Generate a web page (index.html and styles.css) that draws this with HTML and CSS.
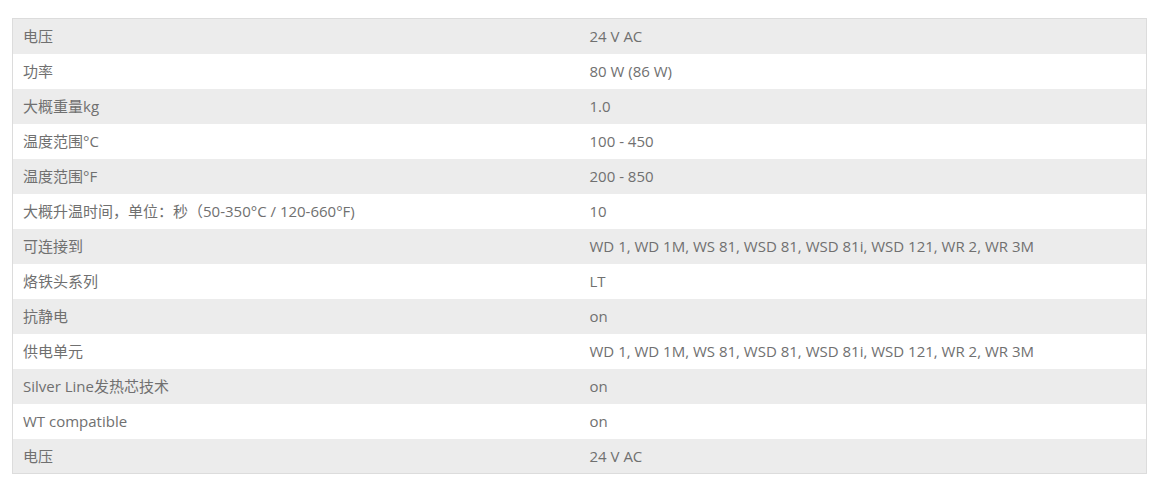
FILE: index.html
```html
<!DOCTYPE html>
<html lang="zh">
<head>
<meta charset="utf-8">
<link rel="stylesheet" href="styles.css">
</head>
<body>
<table class="spec">
<tbody>
<tr><td>电压</td><td>24 V AC</td></tr>
<tr><td>功率</td><td>80 W (86 W)</td></tr>
<tr><td>大概重量kg</td><td>1.0</td></tr>
<tr><td>温度范围°C</td><td>100 - 450</td></tr>
<tr><td>温度范围°F</td><td>200 - 850</td></tr>
<tr><td>大概升温时间，单位：秒（50-350°C / 120-660°F)</td><td>10</td></tr>
<tr><td>可连接到</td><td>WD 1, WD 1M, WS 81, WSD 81, WSD 81i, WSD 121, WR 2, WR 3M</td></tr>
<tr><td>烙铁头系列</td><td>LT</td></tr>
<tr><td>抗静电</td><td>on</td></tr>
<tr><td>供电单元</td><td>WD 1, WD 1M, WS 81, WSD 81, WSD 81i, WSD 121, WR 2, WR 3M</td></tr>
<tr><td>Silver Line发热芯技术</td><td>on</td></tr>
<tr><td>WT compatible</td><td>on</td></tr>
<tr><td>电压</td><td>24 V AC</td></tr>
</tbody>
</table>
</body>
</html>
```

FILE: styles.css
```css
html, body {
  margin: 0;
  background: #fff;
}
body {
  padding: 18px 10px 12px 12px;
  font-family: "Open Sans", "Noto Sans CJK SC", sans-serif;
  font-size: 15px;
  color: #707070;
}
.spec {
  width: 100%;
  border-collapse: collapse;
  border: 1px solid #dcdcdc;
  table-layout: fixed;
}
.spec td {
  height: 35px;
  padding: 0 10px;
  box-sizing: border-box;
  vertical-align: middle;
  line-height: 20px;
  width: 50%;
  white-space: nowrap;
}
.spec tr:nth-child(odd) td {
  background: #ececec;
}
```
